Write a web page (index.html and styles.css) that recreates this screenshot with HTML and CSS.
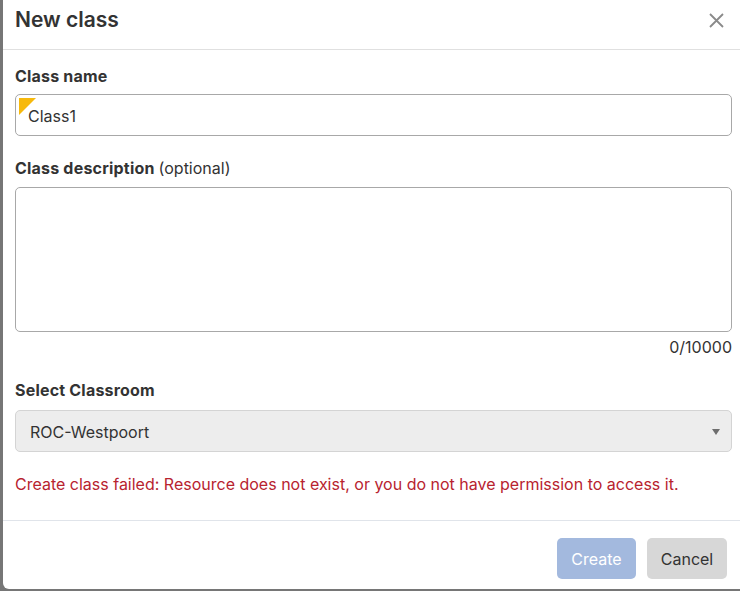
FILE: index.html
```html
<!DOCTYPE html>
<html lang="en">
<head>
    <meta charset="UTF-8">
    <meta name="viewport" content="width=device-width, initial-scale=1.0">
    <title>New class</title>
    <link rel="stylesheet" href="styles.css">
</head>
<body>
    <div class="modal">
        <div class="modal-header">
            <h1>New class</h1>
            <button class="close-btn" aria-label="Close">
                <svg width="15" height="15" viewBox="0 0 15 15">
                    <path d="M1 1 L14 14 M14 1 L1 14" stroke="#8a8a8a" stroke-width="1.8" fill="none"/>
                </svg>
            </button>
        </div>
        <div class="modal-body">
            <label class="field-label">Class name</label>
            <div class="input-wrap">
                <span class="corner-mark"></span>
                <input class="text-input" type="text" value="Class1">
            </div>

            <label class="field-label second">Class description <span class="optional">(optional)</span></label>
            <textarea class="text-area"></textarea>
            <div class="counter">0/10000</div>

            <label class="field-label third">Select Classroom</label>
            <div class="select-box">
                <span>ROC-Westpoort</span>
                <span class="arrow"></span>
            </div>

            <p class="error">Create class failed: Resource does not exist, or you do not have permission to access it.</p>
        </div>
        <div class="modal-footer">
            <button class="btn btn-primary" disabled>Create</button>
            <button class="btn btn-secondary">Cancel</button>
        </div>
    </div>
</body>
</html>
```

FILE: styles.css
```css
body {
    font-family: Inter, Roboto, Arial, sans-serif;
    background-color: #767676;
    margin: 0;
    padding: 0;
    overflow: hidden;
}
.modal {
    background: #fff;
    margin-left: 3px;
    width: 744px;
    height: 589px;
    border-radius: 0 0 0 6px;
    display: flex;
    flex-direction: column;
    color: #333;
}
.modal-header {
    box-sizing: border-box;
    height: 50px;
    padding: 0 12px 9px 12px;
    border-bottom: 1px solid #e0e0e0;
    display: flex;
    align-items: center;
    justify-content: space-between;
}
.modal-header h1 {
    margin: 0;
    font-size: 21px;
    font-weight: 600;
    line-height: 24px;
    color: #333;
}
.close-btn {
    background: none;
    border: none;
    padding: 0;
    margin-right: 11px;
    display: flex;
}
.modal-body {
    padding: 16px 12px 0 12px;
    display: flex;
    flex-direction: column;
    flex: 1;
}
.field-label {
    font-size: 16px;
    font-weight: 700;
    letter-spacing: 0.2px;
    line-height: 20px;
    margin-bottom: 8px;
    color: #333;
}
.field-label.second {
    margin-top: 22px;
    margin-bottom: 9px;
}
.field-label.third {
    margin-top: 23px;
    margin-bottom: 10px;
}
.optional {
    font-weight: 400;
    letter-spacing: 0;
}
.input-wrap {
    position: relative;
    width: 717px;
}
.corner-mark {
    position: absolute;
    left: 4px;
    top: 4px;
    width: 0;
    height: 0;
    border-top: 17px solid #f7b90c;
    border-right: 17px solid transparent;
}
.text-input {
    box-sizing: border-box;
    width: 100%;
    height: 42px;
    border: 1px solid #a8a8a8;
    border-radius: 5px;
    padding: 2px 12px 0 12px;
    font-family: inherit;
    font-size: 16px;
    color: #333;
    outline: none;
}
.text-area {
    box-sizing: border-box;
    width: 717px;
    height: 145px;
    border: 1px solid #a8a8a8;
    border-radius: 5px;
    resize: none;
    font-family: inherit;
    margin: 0;
    display: block;
}
.counter {
    width: 717px;
    text-align: right;
    font-size: 16px;
    line-height: 20px;
    margin-top: 5px;
    color: #333;
}
.select-box {
    box-sizing: border-box;
    width: 717px;
    height: 42px;
    background: #ededed;
    border: 1px solid #d4d4d4;
    border-radius: 5px;
    padding: 2px 11px 0 14px;
    display: flex;
    align-items: center;
    justify-content: space-between;
    font-size: 16px;
    color: #333;
}
.arrow {
    width: 0;
    height: 0;
    border-left: 4px solid transparent;
    border-right: 4px solid transparent;
    border-top: 6px solid #6e6e6e;
}
.error {
    margin: 22px 0 0 0;
    font-size: 16px;
    line-height: 20px;
    color: #b8232f;
}
.modal-footer {
    border-top: 1px solid #e0e4ea;
    height: 69px;
    padding: 17px 0 0 0;
    box-sizing: border-box;
    display: flex;
    justify-content: flex-start;
    padding-left: 554px;
    gap: 11px;
}
.btn {
    height: 41px;
    border: none;
    border-radius: 5px;
    font-family: inherit;
    font-size: 16px;
    padding: 0;
}
.btn-primary {
    background: #a3b9de;
    color: #fff;
    width: 79px;
}
.btn-secondary {
    background: #d7d7d7;
    color: #333;
    width: 80px;
}
```
